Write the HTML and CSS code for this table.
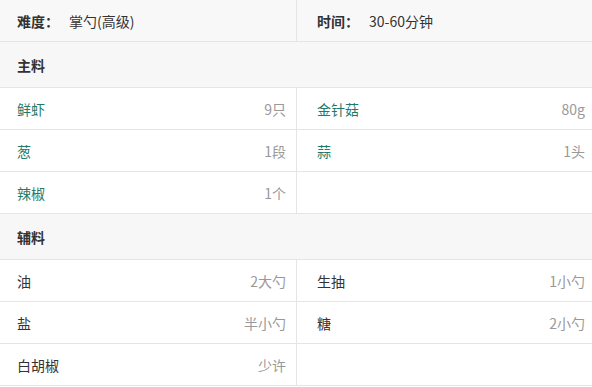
FILE: index.html
```html
<!DOCTYPE html>
<html lang="zh">
<head>
<meta charset="utf-8">
<link rel="stylesheet" href="styles.css">
</head>
<body>
<div class="recipe">
  <div class="row info-row">
    <div class="cell"><span class="label">难度：</span><span class="value">掌勺(高级)</span></div>
    <div class="cell"><span class="label">时间：</span><span class="value">30-60分钟</span></div>
  </div>
  <div class="section">主料</div>
  <div class="row">
    <div class="cell"><span class="name link">鲜虾</span><span class="qty">9只</span></div>
    <div class="cell"><span class="name link">金针菇</span><span class="qty">80g</span></div>
  </div>
  <div class="row">
    <div class="cell"><span class="name link">葱</span><span class="qty">1段</span></div>
    <div class="cell"><span class="name link">蒜</span><span class="qty">1头</span></div>
  </div>
  <div class="row">
    <div class="cell"><span class="name link">辣椒</span><span class="qty">1个</span></div>
    <div class="cell"></div>
  </div>
  <div class="section">辅料</div>
  <div class="row">
    <div class="cell"><span class="name">油</span><span class="qty">2大勺</span></div>
    <div class="cell"><span class="name">生抽</span><span class="qty">1小勺</span></div>
  </div>
  <div class="row">
    <div class="cell"><span class="name">盐</span><span class="qty">半小勺</span></div>
    <div class="cell"><span class="name">糖</span><span class="qty">2小勺</span></div>
  </div>
  <div class="row">
    <div class="cell"><span class="name">白胡椒</span><span class="qty">少许</span></div>
    <div class="cell"></div>
  </div>
</div>
</body>
</html>
```
FILE: styles.css
```css
html, body {
  margin: 0;
  padding: 0;
  background: #fff;
}
body {
  font-family: "Microsoft YaHei", "Noto Sans CJK SC", "Noto Sans", sans-serif;
  font-size: 14px;
  color: #333;
}
.recipe {
  width: 592px;
}
.row {
  display: grid;
  grid-template-columns: 296px 1fr;
  height: 41px;
  border-bottom: 1px solid #e5e5e5;
}
.info-row {
  height: 41px;
  background: #f8f8f8;
}
.cell {
  display: flex;
  align-items: center;
  justify-content: space-between;
  padding: 0 10px 0 17px;
}
.cell + .cell {
  border-left: 1px solid #e5e5e5;
  padding-left: 20px;
  padding-right: 7px;
}
.info-row .cell {
  justify-content: flex-start;
}
.label {
  font-weight: bold;
  margin-right: 10px;
}
.section {
  height: 45px;
  display: flex;
  align-items: center;
  padding-left: 17px;
  font-weight: bold;
  background: #f7f7f7;
  border-bottom: 1px solid #e5e5e5;
}
.link {
  color: #1f7a6b;
}
.qty {
  color: #999;
}
```
